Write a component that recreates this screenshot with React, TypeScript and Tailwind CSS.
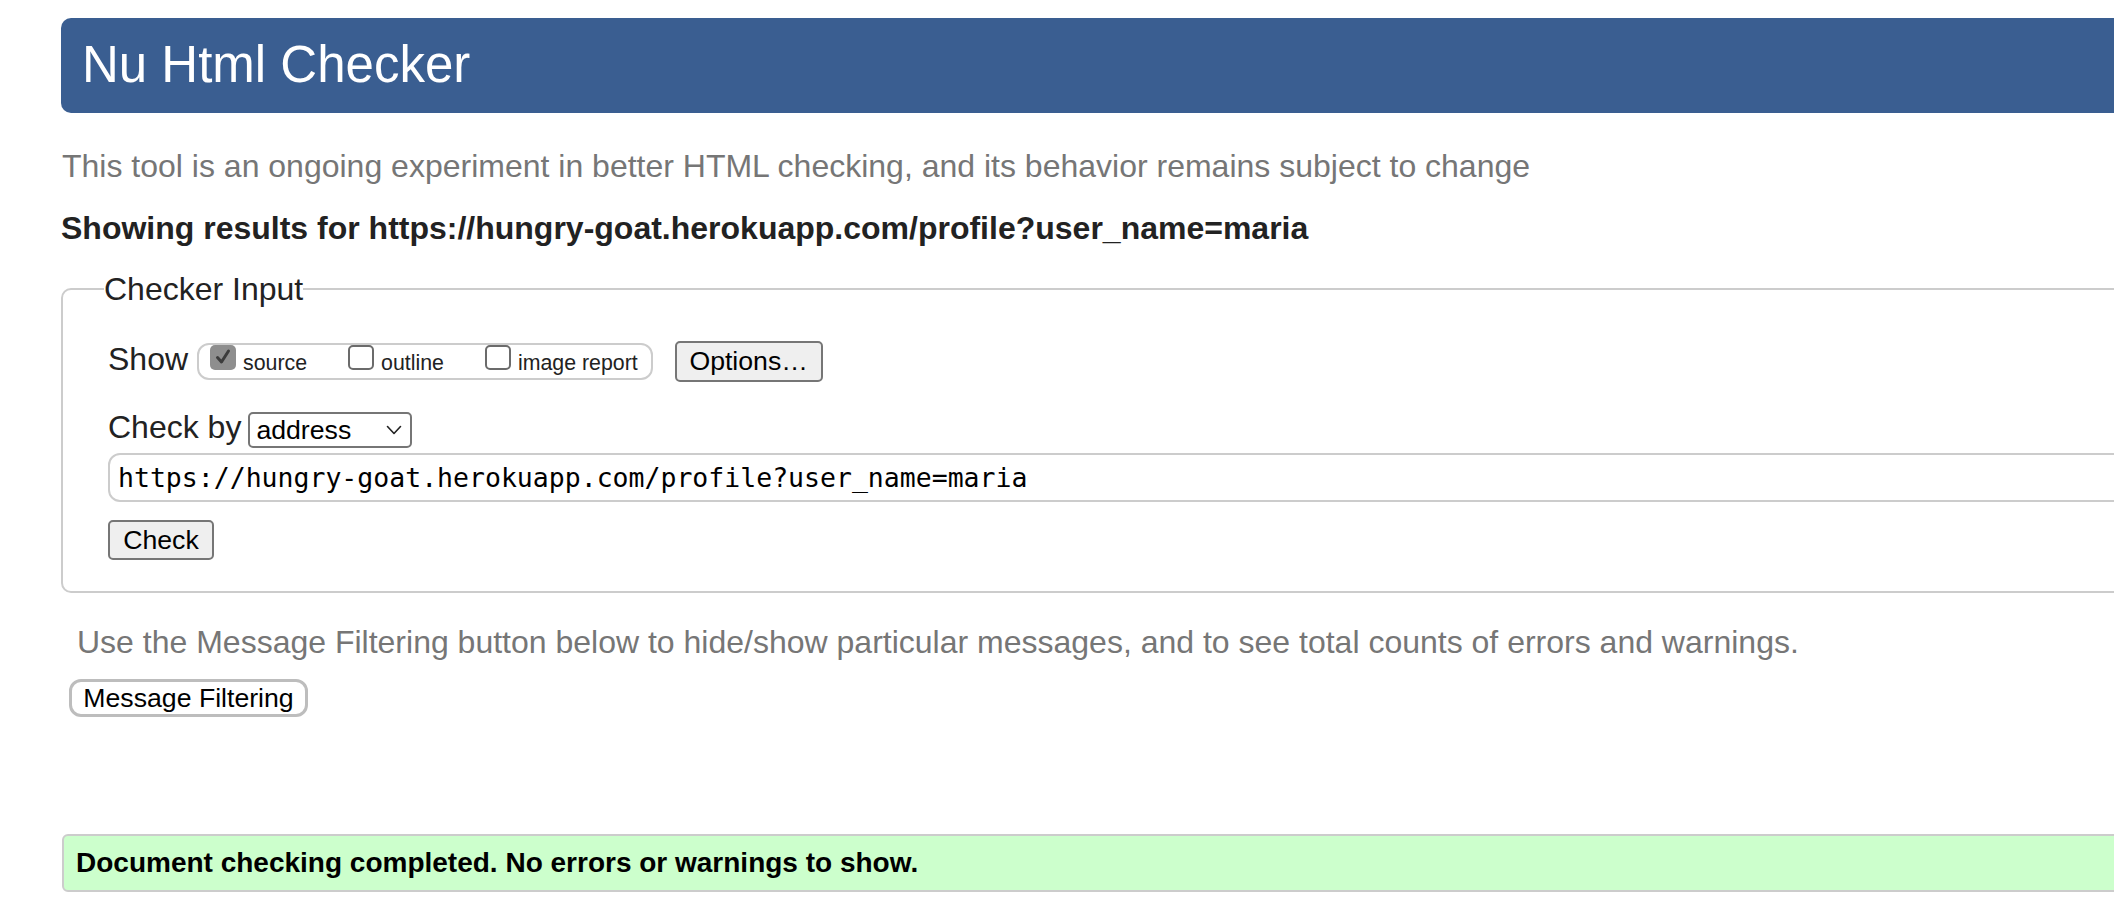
const Checkbox = ({ checked }: { checked?: boolean }) =>
  checked ? (
    <span className="inline-block w-[26px] h-[25px] shrink-0 rounded-[5px] bg-[#8e8e8e] pt-[3px] pl-[4px]">
      <svg className="block" width="18" height="18" viewBox="0 0 18 18" fill="none" stroke="#3c3c3c" strokeWidth="3" strokeLinecap="round" strokeLinejoin="round">
        <path d="M3.5 9.5 7.5 14 14.5 3" />
      </svg>
    </span>
  ) : (
    <span className="inline-block w-[26px] h-[25px] shrink-0 rounded-[5px] border-2 border-[#6b6b6b] bg-white" />
  );

const ShowOption = ({ label, checked }: { label: string; checked?: boolean }) => (
  <label className="flex items-baseline gap-[7px]">
    <Checkbox checked={checked} />
    <span className="text-[21.33px] leading-[25px] text-[#222]">{label}</span>
  </label>
);

const ChevronDown = () => (
  <svg width="16" height="10" viewBox="0 0 16 10" fill="none" stroke="#222" strokeWidth="1.6" strokeLinecap="round" strokeLinejoin="round">
    <path d="M1.5 1.5 8 8.5l6.5-7" />
  </svg>
);

export default function App() {
  return (
    <div className="w-full h-screen overflow-hidden bg-white font-['Liberation_Sans',Arial,sans-serif] text-[#222]">
      <div className="w-[2300px] pl-[61px] pt-[18px]">
        <header className="h-[95px] flex items-center pl-[21px] bg-[#3a5e91] rounded-l-[10px]">
          <h1 className="text-[51px] leading-normal text-white">Nu Html Checker</h1>
        </header>

        <p className="mt-[35px] pl-[1px] text-[32px] leading-[36px] text-[#767676]">
          This tool is an ongoing experiment in better HTML checking, and its behavior remains subject to change
        </p>

        <p className="mt-[26px] text-[32px] leading-[36px] font-bold text-[#222]">
          Showing results for https://hungry-goat.herokuapp.com/profile?user_name=maria
        </p>

        <fieldset className="mt-[25px] border-2 border-[#cccccc] rounded-l-[10px] pl-[41px] pb-[31px]">
          <legend className="text-[32px] leading-[36px] text-[#222]">Checker Input</legend>

          <div className="pl-[4px] mt-[34px] flex flex-col">
            <div className="flex items-start">
              <span className="text-[32px] leading-[36px]">Show</span>
              <div className="ml-[9px] mt-[2px] h-[37px] flex items-start gap-[41px] border-2 border-[#cccccc] rounded-[12px] pl-[11px] pr-[13px]">
                <ShowOption label="source" checked />
                <ShowOption label="outline" />
                <ShowOption label="image report" />
              </div>
              <button className="ml-[22px] w-[148px] h-[41px] flex items-center justify-center border-2 border-[#767676] rounded-[5px] bg-[#efefef] text-[26.67px] leading-none text-black">
                Options…
              </button>
            </div>

            <div className="mt-[27px] flex items-start">
              <span className="text-[32px] leading-[36px]">Check by</span>
              <div className="ml-[7px] mt-[3px] w-[164px] h-[36px] flex items-center justify-between border-2 border-[#767676] rounded-[5px] pl-[6px] pr-[8px] text-[26.67px] leading-none text-black">
                <span>address</span>
                <ChevronDown />
              </div>
            </div>

            <div className="mt-[5px] h-[49px] flex items-center border-2 border-[#cccccc] rounded-l-[12px] pl-[8px] font-['DejaVu_Sans_Mono',monospace] text-[26.5px] text-black">
              https://hungry-goat.herokuapp.com/profile?user_name=maria
            </div>

            <div className="mt-[18px]">
              <button className="w-[106px] h-[40px] flex items-center justify-center border-2 border-[#767676] rounded-[5px] bg-[#efefef] text-[26.67px] leading-none text-black">
                Check
              </button>
            </div>
          </div>
        </fieldset>

        <p className="mt-[31px] pl-[16px] text-[32px] leading-[36px] text-[#767676]">
          Use the Message Filtering button below to hide/show particular messages, and to see total counts of errors and warnings.
        </p>

        <button className="mt-[19px] ml-[8px] w-[239px] h-[38px] flex items-center justify-center border-[3px] border-[#bdbdbd] rounded-[12px] bg-white text-[26.67px] leading-none text-black">
          Message Filtering
        </button>

        <div className="mt-[117px] ml-[1px] h-[58px] flex items-center border-2 border-[#cccccc] rounded-l-[6px] bg-[#ccffcc] pl-[12px]">
          <span className="text-[28px] font-bold text-black">
            Document checking completed. No errors or warnings to show.
          </span>
        </div>
      </div>
    </div>
  );
}
